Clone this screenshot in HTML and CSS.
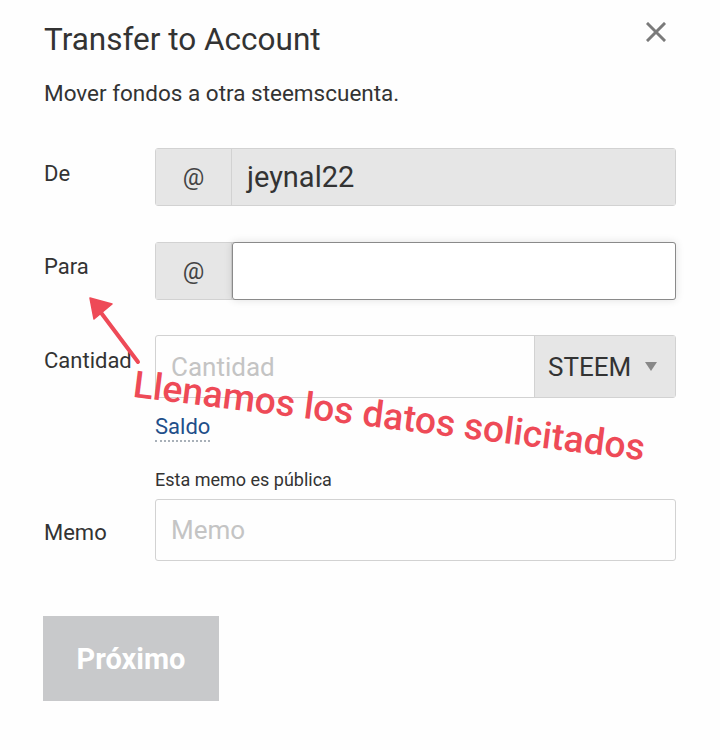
FILE: index.html
```html
<!DOCTYPE html>
<html>
<head>
<meta charset="utf-8">
<link rel="stylesheet" href="styles.css">
</head>
<body>
<div class="dialog">
  <button class="close" aria-label="close">
    <svg width="20" height="20" viewBox="0 0 20 20"><path d="M2 2 L18 18 M18 2 L2 18" stroke="#7a7a7a" stroke-width="3" stroke-linecap="square"/></svg>
  </button>
  <h1 class="title">Transfer to Account</h1>
  <p class="subtitle">Mover fondos a otra steemscuenta.</p>

  <div class="row row-de">
    <div class="label">De</div>
    <div class="group disabled">
      <span class="addon">@</span>
      <span class="field">jeynal22</span>
    </div>
  </div>

  <div class="row row-para">
    <div class="label">Para</div>
    <div class="group">
      <span class="addon">@</span>
      <span class="field focus"></span>
    </div>
  </div>

  <div class="row row-cant">
    <div class="label">Cantidad</div>
    <div class="col">
      <div class="group amount">
        <span class="field placeholder">Cantidad</span>
        <span class="select">STEEM <span class="caret"></span></span>
      </div>
      <a class="saldo">Saldo</a>
    </div>
  </div>

  <div class="row row-memo">
    <div class="label">Memo</div>
    <div class="col">
      <div class="hint">Esta memo es pública</div>
      <div class="group memo">
        <span class="field placeholder">Memo</span>
      </div>
    </div>
  </div>

  <button class="next">Próximo</button>

  <div class="annot">Llenamos los datos solicitados</div>
  <svg class="arrow" width="60" height="80" viewBox="0 0 60 80">
    <path d="M53 72 L14 20" stroke="#ee4a57" stroke-width="4" stroke-linecap="round"/>
    <path d="M5 8 L27 14 L9 29 Z" fill="#ee4a57" stroke="#ee4a57" stroke-width="1.5" stroke-linejoin="round"/>
  </svg>
</div>
</body>
</html>
```

FILE: styles.css
```css
html, body {
  margin: 0;
  padding: 0;
  background: #fefefe;
}
body {
  font-family: Roboto, "Liberation Sans", sans-serif;
  color: #333;
  width: 720px;
  height: 750px;
  overflow: hidden;
}
.dialog {
  position: relative;
  padding: 22px 44px 0 44px;
}
.close {
  position: absolute;
  top: 22px;
  right: 54px;
  border: 0;
  background: none;
  padding: 0;
  width: 20px;
  height: 20px;
}
.title {
  margin: 0;
  font-size: 31.5px;
  font-weight: 400;
  line-height: 36px;
  color: #333;
}
.subtitle {
  margin: 21px 0 0 0;
  font-size: 22.5px;
  line-height: 28px;
  color: #333;
}
.row {
  display: flex;
  align-items: flex-start;
}
.label {
  width: 111px;
  flex: none;
  font-size: 22px;
  line-height: 28px;
  color: #333;
}
.col {
  flex: 1;
  display: flex;
  flex-direction: column;
}
.group {
  flex: 1;
  display: flex;
  height: 58px;
  box-sizing: border-box;
  border: 1px solid #d2d2d2;
  border-radius: 3px;
  font-size: 26px;
}
.col .group {
  flex: none;
}
.addon {
  width: 75px;
  flex: none;
  background: #e6e6e6;
  display: flex;
  align-items: center;
  justify-content: center;
  border-right: 1px solid #d2d2d2;
  color: #444;
  font-size: 24px;
}
.field {
  flex: 1;
  display: flex;
  align-items: center;
  padding-left: 15px;
  color: #333;
}
.disabled .field {
  background: #e6e6e6;
  font-size: 29px;
}
.row-de {
  margin-top: 41px;
}
.row-de .label {
  padding-top: 12px;
}
.row-para {
  margin-top: 36px;
}
.row-para .label {
  padding-top: 11px;
}
.field.focus {
  background: #fff;
  margin: -1px -1px -1px 0;
  border: 1px solid #8a8a8a;
  border-radius: 3px;
  box-shadow: 0 0 8px rgba(0,0,0,0.12);
}
.row-cant {
  margin-top: 35px;
}
.row-cant .label {
  padding-top: 12px;
}
.amount {
  height: 63px;
}
.placeholder {
  color: #c4c4c4;
}
.select {
  width: 141px;
  flex: none;
  background: #e6e6e6;
  display: flex;
  align-items: center;
  padding-left: 13px;
  box-sizing: border-box;
  color: #333;
  border-left: 1px solid #d2d2d2;
}
.caret {
  margin-left: 14px;
  width: 0;
  height: 0;
  border-left: 6px solid transparent;
  border-right: 6px solid transparent;
  border-top: 9px solid #888;
}
.saldo {
  align-self: flex-start;
  margin-top: 16px;
  font-size: 22px;
  color: #1f4f8a;
  line-height: 26px;
  border-bottom: 2px dotted #a8b0b8;
}
.row-memo {
  margin-top: 27px;
}
.row-memo .label {
  padding-top: 50px;
}
.hint {
  font-size: 18px;
  line-height: 22px;
  color: #333;
  margin-bottom: 8px;
}
.memo {
  height: 62px;
}
.next {
  display: block;
  margin-top: 55px;
  margin-left: -1px;
  width: 176px;
  height: 85px;
  border: 0;
  background: #c8c9cb;
  color: #fff;
  font-family: Roboto, "Liberation Sans", sans-serif;
  font-weight: 700;
  font-size: 29px;
}
.annot {
  position: absolute;
  left: 136px;
  top: 364px;
  font-size: 37.2px;
  font-weight: 500;
  line-height: 40px;
  color: #ee4a57;
  transform: rotate(7.1deg);
  transform-origin: left top;
  white-space: nowrap;
}
.arrow {
  position: absolute;
  left: 85px;
  top: 290px;
}
```
